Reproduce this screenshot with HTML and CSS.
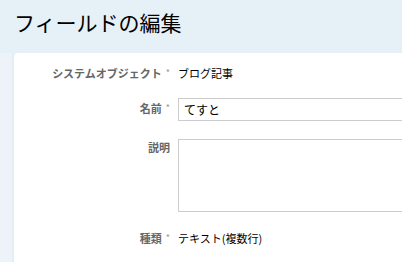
FILE: index.html
```html
<!DOCTYPE html>
<html lang="ja">
<head>
  <meta charset="UTF-8">
  <title>フィールドの編集</title>
  <link rel="stylesheet" href="styles.css">
</head>
<body>

<div class="page">
  <h1>フィールドの編集</h1>

  <div class="body">
    <div class="side"></div>

    <!-- Field edit form -->
    <div class="card">
      <div class="form">
        <div class="label">システムオブジェクト<span class="req">*</span></div>
        <div class="value">ブログ記事</div>

        <div class="label pad">名前<span class="req">*</span></div>
        <div class="value"><input class="input" type="text" value="てすと"></div>

        <div class="label">説明</div>
        <div class="value"><textarea class="textarea"></textarea></div>

        <div class="label">種類<span class="req">*</span></div>
        <div class="value">テキスト(複数行)</div>
      </div>
    </div>
  </div>
</div>

</body>
</html>
```

FILE: styles.css
```css
/* Global */
* {
  box-sizing: border-box;
  margin: 0;
  padding: 0;
}
html, body {
  overflow: hidden;
}
body {
  font-family: "Noto Sans CJK JP", "Noto Sans", sans-serif;
  background-color: #e6f1f7;
  color: #000;
  width: 402px;
  height: 262px;
}
.page {
  display: flex;
  flex-direction: column;
  height: 100%;
}
h1 {
  font-size: 21px;
  font-weight: normal;
  line-height: 28px;
  padding: 8px 0 0 14px;
  height: 53px;
}

/* Body below header */
.body {
  flex: 1;
  display: flex;
  overflow: hidden;
}
.side {
  flex: none;
  width: 14px;
  background-color: #eef3fa;
  border-right: 2px solid #e2edf5;
}
.card {
  flex: none;
  width: 460px;
  background-color: #fff;
  border-top-left-radius: 4px;
  padding: 12px 0 0 0;
}

/* Form grid */
.form {
  display: grid;
  grid-template-columns: 156px 1fr;
  column-gap: 8px;
  row-gap: 18px;
  align-items: start;
  font-size: 11px;
  line-height: 16px;
}
.label {
  text-align: right;
  color: #666;
  font-weight: bold;
}
.label.pad {
  padding-top: 1px;
}
.req {
  color: #999;
  font-weight: normal;
  font-size: 9px;
  margin-left: 4px;
  vertical-align: top;
}
.value {
  color: #000;
}
.input {
  display: block;
  width: 100%;
  height: 23px;
  margin-top: -1px;
  border: 1px solid #ccc;
  padding: 0 5px;
  font-family: inherit;
  font-size: 12px;
  color: #000;
}
.textarea {
  display: block;
  width: 100%;
  height: 73px;
  border: 1px solid #ccc;
  resize: none;
  font-family: inherit;
}
```
